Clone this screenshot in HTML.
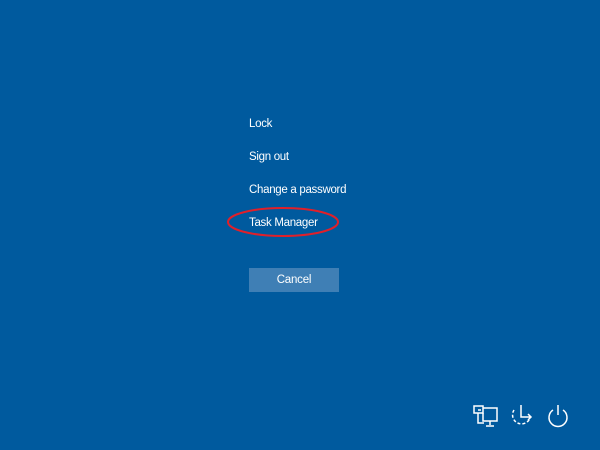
<!DOCTYPE html>
<html><head><style>
body{margin:0;width:600px;height:450px;background:#005a9e;position:relative;overflow:hidden;font-family:"Liberation Sans",sans-serif;color:#fff}
.t{position:absolute;left:249px;font-size:11.5px;line-height:14px;letter-spacing:-0.3px}
.btn{position:absolute;left:249px;top:268px;width:90px;height:24px;background:#3f7fb5;font-size:11.5px;line-height:25px;text-align:center;letter-spacing:-0.2px}
svg{position:absolute;left:0;top:0}
</style></head><body>
<div class="t" style="top:117px">Lock</div>
<div class="t" style="top:150px">Sign out</div>
<div class="t" style="top:183px">Change a password</div>
<div class="t" style="top:216px">Task Manager</div>
<div class="btn">Cancel</div>
<svg width="600" height="450">
<ellipse cx="283" cy="222" rx="55" ry="14" fill="none" stroke="#e0202a" stroke-width="2"/>
<g fill="none" stroke="#fff" stroke-width="1.5">
<rect x="474" y="406" width="9" height="7"/>
<path d="M478 410h3"/>
<path d="M483 408h14v13h-14v-8M478 413v10h6M490 421v4M486 426h8"/>
<path d="M514 410a9 9 0 1 0 16 8" stroke-dasharray="3 2"/>
<path d="M521 405v12h10M528 414l3 3-3 3"/>
<path d="M553 410a9 9 0 1 0 10 0M558 405v10"/>
</g>
</svg>
</body></html>
